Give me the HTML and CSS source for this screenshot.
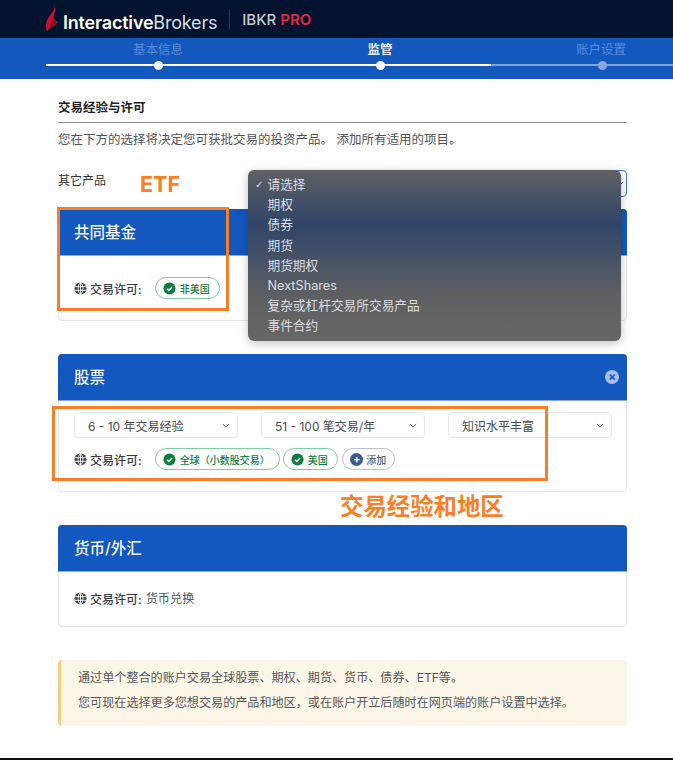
FILE: index.html
```html
<!DOCTYPE html>
<html lang="zh-CN">
<head>
    <meta charset="UTF-8">
    <meta name="viewport" content="width=device-width, initial-scale=1.0">
    <title>交易经验与许可</title>
    <link rel="stylesheet" href="styles.css">
</head>
<body>
    <svg class="icon-defs" width="0" height="0">
        <symbol id="globe" viewBox="0 0 14 14">
            <circle cx="7" cy="7" r="6.5" fill="#3f444b"/>
            <path d="M1 5h12M1 9h12M7 .5v13M7 .5C3.5 4 3.5 10 7 13.5M7 .5c3.5 3.500 3.500 9.500 0 13" fill="none" stroke="#fff" stroke-width=".9"/>
        </symbol>
        <symbol id="check" viewBox="0 0 14 14">
            <circle cx="7" cy="7" r="6.500" fill="#0b7d3e"/>
            <path d="M4.200 7.200l2 2 3.600-3.800" fill="none" stroke="#fff" stroke-width="1.600"/>
        </symbol>
        <symbol id="chevron" viewBox="0 0 10 6">
            <path d="M1 1l4 4 4-4" fill="none" stroke="#555" stroke-width="1.100"/>
        </symbol>
    </svg>

    <header class="top-bar">
        <svg class="logo-flame" viewBox="0 0 12 26" width="12" height="26">
            <path d="M8.500 0C8.800 4 5 7.500 2.500 11.500 .5 14.500 0 17 0 20c0 1.500.3 3.500 1 5.500L4 22c2-.5 5-2 8-6-2-1-3.500-2-4-3.500-.6-2-.3-3.500.5-5.500C9.500 5 9.500 2.500 8.500 0z" fill="#c8102e"/>
            <path d="M4 22c2-.5 5-2 8-6-2-1-3.500-2-4-3.500-3 2-4.500 5.500-4 9.500z" fill="#8e0f22"/>
        </svg>
        <span class="logo-text"><b>Interactive</b>Brokers</span>
        <span class="logo-divider"></span>
        <span class="logo-pro">IBKR <em>PRO</em></span>
    </header>

    <nav class="steps">
        <div class="step-labels">
            <span class="step-label">基本信息</span>
            <span class="step-label active">监管</span>
            <span class="step-label last">账户设置</span>
        </div>
        <div class="step-track">
            <div class="step-done"></div>
            <span class="dot"></span>
            <span class="dot"></span>
            <span class="dot todo"></span>
        </div>
    </nav>

    <main class="content">
        <h1 class="section-title">交易经验与许可</h1>
        <p class="section-desc">您在下方的选择将决定您可获批交易的投资产品。 添加所有适用的项目。</p>

        <div class="other-row">
            <label class="other-label">其它产品</label>
            <div class="other-select"><svg><use href="#chevron"/></svg></div>
            <div class="menu">
                <div class="menu-item selected">请选择</div>
                <div class="menu-item">期权</div>
                <div class="menu-item">债券</div>
                <div class="menu-item">期货</div>
                <div class="menu-item">期货期权</div>
                <div class="menu-item">NextShares</div>
                <div class="menu-item">复杂或杠杆交易所交易产品</div>
                <div class="menu-item">事件合约</div>
            </div>
        </div>

        <section class="card first">
            <div class="card-head">共同基金</div>
            <div class="card-body tall">
                <div class="permit-row">
                    <svg class="globe"><use href="#globe"/></svg>
                    <span class="permit-label">交易许可:</span>
                    <span class="pill"><svg><use href="#check"/></svg>非美国</span>
                </div>
            </div>
        </section>

        <section class="card stocks">
            <div class="card-head">
                股票
                <span class="close-btn">×</span>
            </div>
            <div class="card-body">
                <div class="select-row">
                    <div class="select">6 - 10 年交易经验<svg><use href="#chevron"/></svg></div>
                    <div class="select">51 - 100 笔交易/年<svg><use href="#chevron"/></svg></div>
                    <div class="select">知识水平丰富<svg><use href="#chevron"/></svg></div>
                </div>
                <div class="permit-row">
                    <svg class="globe"><use href="#globe"/></svg>
                    <span class="permit-label">交易许可:</span>
                    <span class="pill"><svg><use href="#check"/></svg>全球（小数股交易）</span>
                    <span class="pill"><svg><use href="#check"/></svg>美国</span>
                    <span class="pill add"><i>+</i>添加</span>
                </div>
            </div>
        </section>

        <section class="card forex">
            <div class="card-head">货币/外汇</div>
            <div class="card-body plain">
                <div class="permit-row">
                    <svg class="globe"><use href="#globe"/></svg>
                    <span class="permit-label">交易许可:</span>
                    <span class="permit-value">货币兑换</span>
                </div>
            </div>
        </section>

        <div class="notice">
            <p>通过单个整合的账户交易全球股票、期权、期货、货币、债券、ETF等。</p>
            <p>您可现在选择更多您想交易的产品和地区，或在账户开立后随时在网页端的账户设置中选择。</p>
        </div>
    </main>

    <!-- annotations drawn on top of the screenshot -->
    <div class="mark mark-fund"></div>
    <div class="mark mark-stock"></div>
    <div class="note note-etf">ETF</div>
    <div class="note note-region">交易经验和地区</div>
    <div class="page-end"></div>
</body>
</html>
```

FILE: styles.css
```css
* {
    box-sizing: border-box;
}

body {
    margin: 0;
    height: 760px;
    position: relative;
    overflow: hidden;
    background-color: #fff;
    color: #3c3f44;
    font-family: Inter, "Noto Sans CJK SC", sans-serif;
    font-size: 12px;
}

.icon-defs {
    position: absolute;
}

.top-bar {
    height: 38px;
    display: flex;
    align-items: center;
    padding-left: 46px;
    background-color: #02132f;
}

.logo-flame {
    margin: -1px 5px 0 0;
}

.logo-text {
    margin-top: 6px;
    font-size: 18px;
    letter-spacing: -0.2px;
    color: #d9dce1;
}

.logo-text b {
    font-weight: 600;
    color: #fff;
}

.logo-divider {
    width: 1px;
    height: 21px;
    margin: 0 12px;
    background-color: #27344c;
}

.logo-pro {
    font-size: 15px;
    font-weight: 500;
    color: #c5c9d0;
}

.logo-pro em {
    font-style: normal;
    font-weight: 600;
    color: #e8263f;
}

.steps {
    height: 41px;
    background-color: #1358bf;
}

.step-labels {
    display: grid;
    grid-template-columns: 222px 222px 1fr;
    margin-left: 47px;
    padding-top: 3px;
}

.step-label {
    text-align: center;
    font-size: 12.500px;
    line-height: 18px;
    color: #5d8bd3;
}

.step-label.active {
    font-weight: 700;
    color: #e9eff9;
}

.step-label.last {
    padding-left: 85px;
    text-align: left;
}

.step-track {
    position: relative;
    display: grid;
    grid-template-columns: 222px 222px 1fr;
    justify-items: center;
    align-items: center;
    height: 10px;
    margin: 1px 0 0 47px;
    background: linear-gradient(#7fa3dc, #7fa3dc) center / 100% 2px no-repeat;
}

.step-done {
    position: absolute;
    left: -1px;
    top: 4px;
    width: 445px;
    height: 2px;
    background-color: #fff;
}

.dot {
    position: relative;
    width: 9px;
    height: 9px;
    border-radius: 50%;
    background-color: #fff;
}

.dot.todo {
    justify-self: start;
    margin-left: 107px;
    background-color: #86a6dc;
}

.content {
    padding: 0 46px 0 58px;
}

.section-title {
    margin: 20px 0 0;
    padding-bottom: 6px;
    border-bottom: 1px solid #8c8c8c;
    font-size: 12.500px;
    line-height: 17px;
    font-weight: 700;
    color: #1d1f22;
}

.section-desc {
    margin: 8px 0 0;
    font-size: 12.500px;
    line-height: 17px;
    color: #50545a;
}

.other-row {
    position: relative;
    display: flex;
    justify-content: space-between;
    margin-top: 22px;
    height: 27px;
}

.other-label {
    line-height: 22px;
    color: #2f3236;
}

.other-select {
    display: flex;
    justify-content: flex-end;
    align-items: center;
    width: 300px;
    height: 27px;
    padding-right: 2px;
    border: 1px solid #3b74d1;
    border-radius: 4px;
}

.other-select svg {
    width: 8px;
    height: 5px;
}

.menu {
    position: absolute;
    z-index: 5;
    left: 190px;
    top: 0;
    width: 373px;
    height: 171px;
    padding-top: 5px;
    border-radius: 6px;
    background: linear-gradient(#606164 0, #4c5666 12%, #2f4467 32%, #4a5566 55%, #5f6061 75%, #666 100%);
    box-shadow: 0 2px 10px rgba(0, 0, 0, 0.25);
}

.menu-item {
    height: 20.200px;
    padding-left: 19.500px;
    font-size: 12.700px;
    line-height: 20px;
    color: #dcdde0;
}

.menu-item.selected {
    position: relative;
}

.menu-item.selected::before {
    content: "✓";
    position: absolute;
    left: 7px;
    font-size: 10px;
    font-family: "DejaVu Sans", sans-serif;
}

.card {
    border: 1px solid #e6e7ea;
    border-radius: 4px;
    background-color: #fff;
}

.card.first {
    margin-top: 12px;
    height: 112px;
}

.card.stocks {
    margin-top: 33px;
    height: 138px;
}

.card.forex {
    margin-top: 33px;
    height: 102px;
}

.card-head {
    position: relative;
    height: 47px;
    margin: -1px -1px 0;
    padding-left: 16px;
    border-bottom: 1px solid #8aa8dd;
    border-radius: 4px 4px 0 0;
    background-color: #1358bf;
    color: #f4f6fb;
    font-size: 15.500px;
    font-weight: 500;
    line-height: 47px;
}

.close-btn {
    position: absolute;
    right: 8px;
    top: 16px;
    width: 14px;
    height: 14px;
    border-radius: 50%;
    background-color: #a9bdea;
    color: #1358bf;
    font-size: 12px;
    font-weight: 700;
    line-height: 14px;
    text-align: center;
}

.card-body {
    padding: 11px 15px 0;
}

.card-body.tall {
    padding-top: 21px;
}

.card-body.plain {
    padding-top: 15px;
}

.select-row {
    display: grid;
    grid-template-columns: repeat(3, 163.500px);
    column-gap: 23.500px;
    margin-bottom: 10px;
}

.select {
    display: flex;
    justify-content: space-between;
    align-items: center;
    height: 26px;
    padding: 0 7px 0 13px;
    border: 1px solid #e8e9ec;
    border-radius: 4px;
    color: #484b50;
    font-size: 12px;
}

.select svg {
    width: 8px;
    height: 5px;
}

.permit-row {
    display: flex;
    align-items: center;
    height: 22px;
}

.globe {
    width: 13px;
    height: 13px;
    margin-right: 3px;
}

.permit-label {
    font-weight: 500;
    color: #3a3d42;
    font-size: 12px;
}

.permit-value {
    margin-left: 4px;
    color: #55585d;
    font-size: 12.200px;
}

.pill {
    display: inline-flex;
    align-items: center;
    height: 22px;
    margin-left: 3px;
    padding: 0 9px 0 7.500px;
    border: 1px solid #83cfa2;
    border-radius: 11px;
    color: #12803f;
    font-size: 10px;
    font-weight: 500;
}

.permit-label + .pill {
    margin-left: 13px;
}

.pill svg {
    width: 13px;
    height: 13px;
    margin-right: 3.500px;
}

.pill.add {
    margin-left: 4px;
    padding-right: 8px;
    border-color: #b4c1d8;
    color: #4f6484;
}

.pill.add i {
    width: 13px;
    height: 13px;
    margin-right: 3px;
    border-radius: 50%;
    background-color: #3d5b8a;
    color: #fff;
    font-style: normal;
    font-weight: 700;
    font-size: 11px;
    line-height: 13px;
    text-align: center;
}

.notice {
    height: 66px;
    margin-top: 33px;
    padding: 5px 0 0 17px;
    border-left: 3px solid #f8cf80;
    border-radius: 4px;
    background-color: #fcf6e9;
    color: #55575a;
    font-size: 12.100px;
    line-height: 25px;
}

.notice p {
    margin: 0;
}

.mark {
    position: absolute;
    z-index: 6;
    border: 3px solid #f97e26;
}

.mark-fund {
    left: 57px;
    top: 207px;
    width: 172px;
    height: 104px;
}

.mark-stock {
    left: 52px;
    top: 406px;
    width: 496px;
    height: 75px;
}

.note {
    position: absolute;
    z-index: 6;
    color: #f97e26;
    font-weight: 700;
}

.note-etf {
    left: 140px;
    top: 170px;
    font-size: 21.500px;
    line-height: 28px;
}

.note-region {
    left: 340px;
    top: 493px;
    font-size: 23.400px;
    line-height: 28px;
}

.page-end {
    position: absolute;
    left: 0;
    right: 0;
    bottom: 0;
    height: 2px;
    background-color: #111;
}
```
